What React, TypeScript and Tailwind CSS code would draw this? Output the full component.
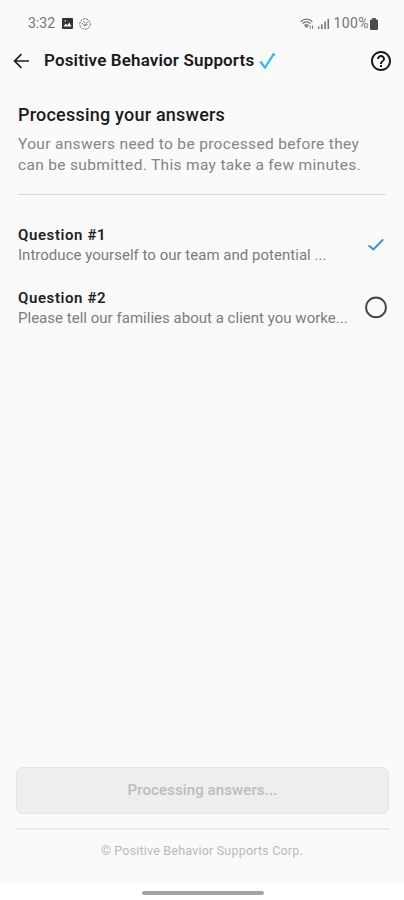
interface Question {
  id: number;
  text: string;
  done: boolean;
}

const questions: Question[] = [
  { id: 1, text: "Introduce yourself to our team and potential ...", done: true },
  { id: 2, text: "Please tell our families about a client you worke...", done: false },
];

function StatusBar() {
  return (
    <div className="flex h-11 items-center pt-[3px] pr-[26px] pl-7 text-[14px] text-[#747474]">
      <span>3:32</span>
      <svg className="ml-[7px]" width="11" height="11" viewBox="0 0 11 11">
        <rect width="11" height="11" rx="1" fill="#333" />
        <path d="M1.5 8.5 3.7 5.4 5.3 7.2 7.3 4.5 9.5 8.5Z" fill="#fafafa" />
        <circle cx="3.3" cy="3" r="0.8" fill="#fafafa" />
      </svg>
      <svg className="ml-[6px]" width="12" height="12" viewBox="0 0 12 12" fill="none" stroke="#777">
        <circle cx="6" cy="6" r="5.2" strokeDasharray="2.4 0.7" />
        <path d="M2.8 4.6 5.3 7.8 9 3.4M5.3 7.8 8.6 6.6M4.4 3.2 6 5" strokeWidth="1" />
      </svg>

      <div className="ml-auto flex items-center">
        <svg width="14" height="12" viewBox="0 0 14 12" fill="none" stroke="#777">
          <path d="M0.7 3.7C4 0.2 9 0.2 12.3 3.7" strokeWidth="1.3" />
          <path d="M2.5 5.6C4.8 3.2 8.2 3.2 10.5 5.6" strokeWidth="1.2" />
          <path d="M4.2 7.3C5.6 5.9 7.3 5.9 8.7 7.3L6.5 10Z" fill="#888" strokeWidth="0.6" />
          <path d="M10.2 10.8V7.5M12.5 7.5V10.8" />
        </svg>
        <svg className="ml-[4px]" width="12" height="12" viewBox="0 0 12 12" fill="#777">
          <rect x="0" y="8.5" width="1.4" height="2.5" />
          <rect x="3" y="6.3" width="1.6" height="4.7" />
          <rect x="6.3" y="3.5" width="1.6" height="7.5" />
          <rect x="9.5" y="0.8" width="1.6" height="10.2" />
        </svg>
        <span className="ml-[4px] tracking-[0.4px]">100%</span>
        <svg className="ml-px" width="8" height="12" viewBox="0 0 8 12" fill="#4a4a4a">
          <rect x="2.3" y="0" width="3.4" height="3" />
          <rect x="0" y="1.4" width="8" height="10.6" rx="1" />
        </svg>
      </div>
    </div>
  );
}

function Header() {
  return (
    <header className="flex h-[34px] items-center pr-[12px] pl-[13px]">
      <svg width="17" height="16" viewBox="0 0 17 16" fill="none" stroke="#1c1c1c" strokeWidth="1.7">
        <path d="M16 8H2M8.4 1.2 1.6 8 8.4 14.8" />
      </svg>
      <h1 className="ml-[14px] text-[17px] font-semibold tracking-[0.15px] text-[#1a1a1a]">
        Positive Behavior Supports
      </h1>
      <svg className="ml-[5px]" width="18" height="18" viewBox="0 0 18 18" fill="none" stroke="#36b8f5">
        <path d="M1.3 9.5 6 15.5 14.3 2.6" strokeWidth="2.2" />
        <circle cx="14.7" cy="2.4" r="1.5" fill="#36b8f5" stroke="none" />
      </svg>
      <svg className="ml-auto" width="22" height="22" viewBox="1 1 22 22" fill="#1a1a1a">
        <path d="M11 18h2v-2h-2v2zm1-16C6.48 2 2 6.48 2 12s4.48 10 10 10 10-4.48 10-10S17.52 2 12 2zm0 18c-4.41 0-8-3.59-8-8s3.59-8 8-8 8 3.59 8 8-3.59 8-8 8zm0-14c-2.21 0-4 1.79-4 4h2c0-1.1.9-2 2-2s2 .9 2 2c0 2-3 1.75-3 5h2c0-2.25 3-2.5 3-5 0-2.21-1.79-4-4-4z" />
      </svg>
    </header>
  );
}

function QuestionRow({ question }: { question: Question }) {
  return (
    <li className="flex h-[63px] items-center justify-between pr-[16px] pl-[18px]">
      <div className="whitespace-nowrap">
        <h3 className="text-[15px] leading-5 font-semibold tracking-[0.6px] text-[#222]">
          Question #{question.id}
        </h3>
        <p className="text-[15px] leading-5 tracking-[0.02px] text-[#7c7c7c]">{question.text}</p>
      </div>
      {question.done ? (
        <svg width="24" height="24" viewBox="0 0 24 24" fill="none" stroke="#2f8ceb" strokeWidth="1.9">
          <path d="M4.6 12.4 9.4 16.5 19.2 6.3" />
        </svg>
      ) : (
        <svg width="24" height="24" viewBox="0 0 24 24" fill="none" stroke="#444" strokeWidth="1.9">
          <circle cx="12" cy="11.4" r="9.9" />
        </svg>
      )}
    </li>
  );
}

export default function App() {
  return (
    <div className="flex h-[900px] w-[404px] flex-col overflow-hidden bg-white font-['Roboto',sans-serif]">
      <div className="flex flex-1 flex-col bg-[#fafafa]">
        <StatusBar />
        <Header />

        <section className="mx-[18px] h-[117px] border-b border-[#d9d9d9] pt-[25px] whitespace-nowrap">
          <h2 className="text-[18px] leading-6 font-medium tracking-[0.22px] text-[#1a1a1a]">
            Processing your answers
          </h2>
          <p className="mt-[7px] text-[15.5px] leading-[20.5px] tracking-[0.33px] text-[#858585]">
            Your answers need to be processed before they
            <br />
            can be submitted. This may take a few minutes.
          </p>
        </section>

        <ul className="mt-[18px]">
          {questions.map((q) => (
            <QuestionRow key={q.id} question={q} />
          ))}
        </ul>

        <footer className="mt-auto flex h-[117px] flex-col px-4">
          <button
            disabled
            className="h-[47px] w-[373px] shrink-0 rounded-[7px] border border-[#e4e4e4] bg-[#eeeeee] text-[15px] font-medium tracking-[0.1px] text-[#bcbcbc]"
          >
            Processing answers...
          </button>
          <div className="mt-[14px] h-[2px] w-[374px] shrink-0 bg-[#ebebeb]" />
          <p className="mt-[13px] text-center text-[12.5px] leading-4 tracking-[0.2px] text-[#b9b9b9]">
            © Positive Behavior Supports Corp.
          </p>
        </footer>
      </div>
      <div className="flex h-4 justify-center pt-[7px] pl-px">
        <div className="h-[4px] w-[122px] rounded-full bg-[#a3a3a3]" />
      </div>
    </div>
  );
}
